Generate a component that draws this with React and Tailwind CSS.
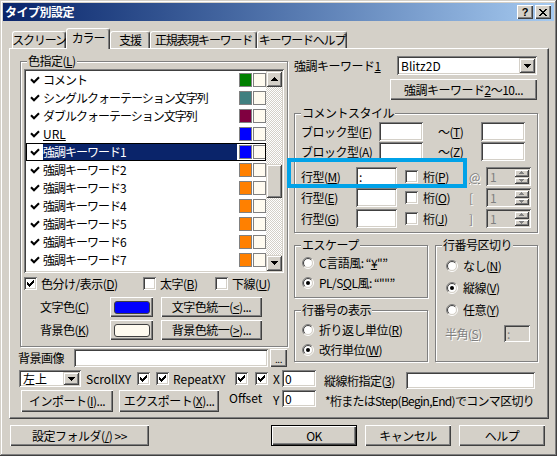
import React from "react";

const RAISED = "shadow-[inset_1px_1px_#ffffff,inset_-1px_-1px_#404040,inset_-2px_-2px_#808080]";
const SBTN = "shadow-[inset_1px_1px_#d4d0c8,inset_-1px_-1px_#404040,inset_2px_2px_#ffffff,inset_-2px_-2px_#808080]";
const SUNKEN = "shadow-[inset_1px_1px_#808080,inset_-1px_-1px_#ffffff,inset_2px_2px_#404040,inset_-2px_-2px_#d4d0c8]";
const DITHER = "bg-[repeating-conic-gradient(#ffffff_0_25%,#d4d0c8_0_50%)] bg-[length:2px_2px]";

function Tri({ up = false, color = "#000000" }) {
  return (
    <svg width="7" height="4" viewBox="0 0 7 4" shapeRendering="crispEdges">
      {up ? (
        <path d="M3 0h1v1h1v1h1v1h1v1H0V3h1V2h1V1h1z" fill={color} />
      ) : (
        <path d="M0 0h7v1H6v1H5v1H4v1H3V3H2V2H1V1H0z" fill={color} />
      )}
    </svg>
  );
}

function TinyTri({ up = false }) {
  return (
    <svg width="5" height="3" viewBox="0 0 5 3" shapeRendering="crispEdges">
      {up ? (
        <path d="M2 0h1v1h1v1h1v1H0V2h1V1h1z" fill="#808080" />
      ) : (
        <path d="M0 0h5v1H4v1H3v1H2V2H1V1H0z" fill="#808080" />
      )}
    </svg>
  );
}

function Btn({ className = "", children }) {
  return (
    <div className={`flex items-center justify-center whitespace-nowrap bg-[#d4d0c8] ${RAISED} ${className}`}>
      {children}
    </div>
  );
}

function Field({ className = "", children }) {
  return <div className={`bg-white ${SUNKEN} ${className}`}>{children}</div>;
}

function Check({ checked = false }) {
  return (
    <span className={`w-[13px] h-[13px] shrink-0 bg-white flex items-center justify-center ${SUNKEN}`}>
      {checked && (
        <svg width="7" height="7" viewBox="0 0 7 7" shapeRendering="crispEdges">
          <path d="M6 0h1v3H6v1H5v1H4v1H3v1H2V6H1V5H0V2h1v1h1v1h1V3h1V2h1V1h1z" fill="#000" />
        </svg>
      )}
    </span>
  );
}

function Radio({ checked = false }) {
  const c = 6;
  const r1 = 5.5;
  const r2 = 4.5;
  const d1 = r1 / Math.SQRT2;
  const d2 = r2 / Math.SQRT2;
  return (
    <svg width="12" height="12" viewBox="0 0 12 12" className="shrink-0">
      <circle cx="6" cy="6" r="4.5" fill="#ffffff" />
      <path d={`M${c - d1} ${c + d1} A${r1} ${r1} 0 0 1 ${c + d1} ${c - d1}`} stroke="#808080" fill="none" />
      <path d={`M${c + d1} ${c - d1} A${r1} ${r1} 0 0 1 ${c - d1} ${c + d1}`} stroke="#ffffff" fill="none" />
      <path d={`M${c - d2} ${c + d2} A${r2} ${r2} 0 0 1 ${c + d2} ${c - d2}`} stroke="#404040" fill="none" />
      <path d={`M${c + d2} ${c - d2} A${r2} ${r2} 0 0 1 ${c - d2} ${c + d2}`} stroke="#d4d0c8" fill="none" />
      {checked && <circle cx="6" cy="6" r="2" fill="#000000" />}
    </svg>
  );
}

function ListCheck() {
  return (
    <svg width="10" height="8" viewBox="0 0 10 8" className="shrink-0">
      <path d="M1 3.2 L4 6.2 L9 1.2" stroke="#000" strokeWidth="2.1" fill="none" />
    </svg>
  );
}

function Group({ label, className = "", children }) {
  return (
    <div className={`relative border border-[#808080] shadow-[inset_1px_1px_#ffffff,1px_1px_#ffffff] ${className}`}>
      <span className="absolute left-[6px] top-[-8px] px-[1px] bg-[#d4d0c8] leading-[14px] whitespace-nowrap">
        {label}
      </span>
      {children}
    </div>
  );
}

function Combo({ className = "", text }) {
  return (
    <div className={`bg-white ${SUNKEN} p-[2px] flex ${className}`}>
      <span className="flex-1 pl-[2px] flex items-center tracking-normal">{text}</span>
      <div className={`w-[16px] bg-[#d4d0c8] ${SBTN} flex items-center justify-center`}>
        <Tri />
      </div>
    </div>
  );
}

function Spin() {
  return (
    <div className={`w-[45px] h-[19px] bg-[#d4d0c8] ${SUNKEN} p-[2px] flex`}>
      <span className="flex-1 pl-[2px] flex items-center text-[#808080]">1</span>
      <div className="w-[15px] flex flex-col">
        <div className={`flex-1 bg-[#d4d0c8] ${SBTN} flex items-center justify-center`}>
          <TinyTri up />
        </div>
        <div className={`flex-1 bg-[#d4d0c8] ${SBTN} flex items-center justify-center`}>
          <TinyTri />
        </div>
      </div>
    </div>
  );
}

function Tab({ w, sel = false, children }) {
  return (
    <div
      className={`${w} shrink-0 flex items-center justify-center whitespace-nowrap tracking-[-1.2px] bg-[#d4d0c8] border-l border-t border-r border-l-white border-t-white border-r-[#404040] rounded-t-[3px] shadow-[inset_-1px_0_#808080] ${
        sel ? "h-[21px] -mb-[1px] z-10 pb-[2px]" : "h-[17px]"
      }`}
    >
      {children}
    </div>
  );
}

const items = [
  { t: "コメント", c: "bg-[#008000]" },
  { t: "シングルクォーテーション文字列", c: "bg-[#408080]" },
  { t: "ダブルクォーテーション文字列", c: "bg-[#800040]" },
  { t: "URL", c: "bg-[#0000ff]", u: true },
  { t: "強調キーワード1", c: "bg-[#0000ff]", sel: true },
  { t: "強調キーワード2", c: "bg-[#ff8000]" },
  { t: "強調キーワード3", c: "bg-[#ff8000]" },
  { t: "強調キーワード4", c: "bg-[#ff8000]" },
  { t: "強調キーワード5", c: "bg-[#ff8000]" },
  { t: "強調キーワード6", c: "bg-[#ff8000]" },
  { t: "強調キーワード7", c: "bg-[#ff8000]" },
];

function CommentRow({ label, mid, className = "" }) {
  return (
    <div className={`h-[19px] flex items-center ${className}`}>
      <span className="w-[84px] pl-[6px]">{label}</span>
      <Field className="w-[44px] h-[19px]" />
      <span className="ml-[15px] w-[43px]">{mid}</span>
      <Field className="w-[44px] h-[19px]" />
    </div>
  );
}

function LineRow({ label, mark, acc, first = false, className = "" }) {
  return (
    <div className={`h-[19px] flex items-center ${className}`}>
      <span className="w-[61px] pl-[6px]">{label}</span>
      <Field className="w-[41px] h-[19px] flex items-center pl-[3px]">{first ? ":" : ""}</Field>
      <span className="ml-[8px]">
        <Check />
      </span>
      <span className="ml-[5px] w-[46px]">
        桁(<u>{acc}</u>)
      </span>
      <span className="w-[17px] text-[#808080] [text-shadow:1px_1px_#ffffff]">
        {first ? <u>@</u> : mark}
      </span>
      <Spin />
    </div>
  );
}

export default function App() {
  return (
    <div className="relative w-[557px] h-[456px] overflow-hidden bg-[#d4d0c8] p-[3px] flex flex-col text-[12px] leading-[14px] tracking-[-0.5px] text-black font-['Noto_Sans_CJK_JP','Noto_Sans',sans-serif] shadow-[inset_-1px_-1px_#404040,inset_1px_1px_#d4d0c8,inset_-2px_-2px_#808080,inset_2px_2px_#ffffff]">
      {/* Title bar */}
      <div className="h-[18px] shrink-0 flex items-center pl-[2px] pr-[3px] bg-linear-to-r from-[#0a246a] to-[#a6caf0]">
        <span className="text-white font-bold tracking-[-0.5px]">タイプ別設定</span>
        <div className="ml-auto flex gap-[2px]">
          <Btn className="w-[16px] h-[14px] font-bold text-[11px] leading-[12px] tracking-normal font-['Liberation_Sans',sans-serif]">?</Btn>
          <Btn className="w-[16px] h-[14px]">
            <svg width="8" height="7" viewBox="0 0 8 7" shapeRendering="crispEdges">
              <path d="M0 0h2v1h1v1h2V1h1V0h2v1H7v1H6v1H5v1h1v1h1v1h1v1H6V6H5V5H3v1H2v1H0V6h1V5h1V4h1V3H2V2H1V1H0z" fill="#000" />
            </svg>
          </Btn>
        </div>
      </div>

      {/* Tabs */}
      <div className="mt-[7px] h-[20px] shrink-0 flex items-end pl-[9px] relative z-10">
        <Tab w="w-[54px]">スクリーン</Tab>
        <Tab w="w-[44px]" sel>
          カラー
        </Tab>
        <Tab w="w-[40px]">支援</Tab>
        <Tab w="w-[107px]">正規表現キーワード</Tab>
        <Tab w="w-[90px]">キーワードヘルプ</Tab>
      </div>

      {/* Tab panel */}
      <div className="ml-[6px] w-[540px] h-[371px] shrink-0 border border-t-white border-l-white border-r-[#404040] border-b-[#404040] shadow-[inset_-1px_-1px_#808080] flex flex-col">
        {/* top section */}
        <div className="flex">
          {/* left column */}
          <div className="w-[278px] flex flex-col">
            <Group
              label={
                <>
                  色指定(<u>L</u>)
                </>
              }
              className="ml-[10px] mt-[12px] w-[268px] h-[286px] flex flex-col"
            >
              {/* list box */}
              <div className={`ml-[3px] mt-[7px] w-[260px] h-[204px] bg-white ${SUNKEN} p-[2px] flex`}>
                <div className="w-[240px] flex flex-col tracking-[-1px]">
                  {items.map((it, i) => (
                    <div
                      key={i}
                      className={`h-[18px] flex items-center pl-[4px] ${
                        it.sel ? "outline outline-1 outline-black -outline-offset-1" : ""
                      }`}
                    >
                      <ListCheck />
                      <span
                        className={`ml-[3px] w-[194px] h-[16px] flex items-center whitespace-nowrap ${
                          it.sel ? "bg-[#0a246a] text-white" : ""
                        }`}
                      >
                        {it.u ? <u className="tracking-normal">URL</u> : it.t}
                      </span>
                      <span className={`ml-[2px] w-[13px] h-[14px] border border-[#808080] ${it.c}`} />
                      <span className="ml-[1px] w-[13px] h-[14px] border border-[#808080] bg-[#fffbf0]" />
                    </div>
                  ))}
                </div>
                <div className="w-[16px] flex flex-col">
                  <div className={`h-[16px] bg-[#d4d0c8] ${SBTN} flex items-center justify-center`}>
                    <Tri up />
                  </div>
                  <div className={`h-[77px] ${DITHER}`} />
                  <div className={`h-[34px] bg-[#d4d0c8] ${SBTN}`} />
                  <div className={`flex-1 ${DITHER}`} />
                  <div className={`h-[16px] bg-[#d4d0c8] ${SBTN} flex items-center justify-center`}>
                    <Tri />
                  </div>
                </div>
              </div>

              {/* checkbox row */}
              <div className="ml-[3px] mt-[4px] h-[13px] flex items-center">
                <div className="w-[119px] flex items-center">
                  <Check checked />
                  <span className="ml-[4px]">
                    色分け/表示(<u>D</u>)
                  </span>
                </div>
                <div className="w-[72px] flex items-center">
                  <Check />
                  <span className="ml-[4px]">
                    太字(<u>B</u>)
                  </span>
                </div>
                <div className="flex items-center">
                  <Check />
                  <span className="ml-[4px]">
                    下線(<u>U</u>)
                  </span>
                </div>
              </div>

              {/* text color */}
              <div className="mt-[7px] h-[20px] flex items-center">
                <span className="ml-[19px] w-[70px]">
                  文字色(<u>C</u>)
                </span>
                <Btn className="w-[43px] h-[20px]">
                  <span className="w-[36px] h-[13px] rounded-[3px] border border-[#404040] bg-[#0000ff]" />
                </Btn>
                <Btn className="ml-[8px] w-[101px] h-[20px]">
                  文字色統一(<u>&lt;</u>)...
                </Btn>
              </div>
              <div className="mt-[3px] h-[20px] flex items-center">
                <span className="ml-[19px] w-[70px]">
                  背景色(<u>K</u>)
                </span>
                <Btn className="w-[43px] h-[20px]">
                  <span className="w-[36px] h-[13px] rounded-[3px] border border-[#404040] bg-[#fffbf0]" />
                </Btn>
                <Btn className="ml-[8px] w-[101px] h-[20px]">
                  背景色統一(<u>&gt;</u>)...
                </Btn>
              </div>
            </Group>

            {/* background image */}
            <div className="mt-[2px] h-[18px] flex items-center pl-[8px]">
              <span className="w-[56px]">背景画像</span>
              <Field className="w-[194px] h-[18px]" />
              <Btn className="ml-[2px] w-[17px] h-[18px] text-[10px] leading-[10px] items-end pb-[3px]">...</Btn>
            </div>
          </div>

          {/* right column */}
          <div className="ml-[6px] w-[244px] flex flex-col">
            <div className="mt-[7px] h-[19px] flex items-center">
              <span>
                強調キーワード<u>1</u>
              </span>
              <Combo className="ml-auto mr-[1px] w-[140px] h-[19px]" text="Blitz2D" />
            </div>
            <Btn className="mt-[4px] self-end mr-[1px] w-[147px] h-[21px]">
              強調キーワード<u>2</u>～10...
            </Btn>

            <Group label="コメントスタイル" className="mt-[13px] h-[120px] flex flex-col">
              <CommentRow
                className="mt-[8px]"
                label={
                  <>
                    ブロック型(<u>F</u>)
                  </>
                }
                mid={
                  <>
                    ～(<u>T</u>)
                  </>
                }
              />
              <CommentRow
                className="mt-[1px]"
                label={
                  <>
                    ブロック型(<u>A</u>)
                  </>
                }
                mid={
                  <>
                    ～(<u>Z</u>)
                  </>
                }
              />
              <LineRow
                className="mt-[6px]"
                first
                acc="P"
                label={
                  <>
                    行型(<u>M</u>)
                  </>
                }
              />
              <LineRow
                className="mt-[2px]"
                mark="["
                acc="O"
                label={
                  <>
                    行型(<u>E</u>)
                  </>
                }
              />
              <LineRow
                className="mt-[2px]"
                mark="]"
                acc="J"
                label={
                  <>
                    行型(<u>G</u>)
                  </>
                }
              />
            </Group>

            <div className="mt-[12px] flex">
              <div className="w-[134px] flex flex-col">
                <Group label="エスケープ" className="h-[53px] flex flex-col pt-[7px]">
                  <div className="h-[20px] flex items-center pl-[7px]">
                    <Radio />
                    <span className="ml-[5px]">
                      C言語風: “<u>¥</u>"”
                    </span>
                  </div>
                  <div className="h-[20px] flex items-center pl-[7px]">
                    <Radio checked />
                    <span className="ml-[5px]">
                      PL/S<u>Q</u>L風: “""”
                    </span>
                  </div>
                </Group>
                <Group label="行番号の表示" className="mt-[12px] h-[52px] flex flex-col pt-[9px]">
                  <div className="h-[20px] flex items-center pl-[7px]">
                    <Radio />
                    <span className="ml-[5px]">
                      折り返し単位(<u>R</u>)
                    </span>
                  </div>
                  <div className="h-[20px] flex items-center pl-[7px]">
                    <Radio checked />
                    <span className="ml-[5px]">
                      改行単位(<u>W</u>)
                    </span>
                  </div>
                </Group>
              </div>
              <Group label="行番号区切り" className="ml-[7px] w-[103px] h-[117px] flex flex-col pt-[9px]">
                <div className="h-[22px] flex items-center pl-[10px]">
                  <Radio />
                  <span className="ml-[5px]">
                    なし(<u>N</u>)
                  </span>
                </div>
                <div className="h-[22px] flex items-center pl-[10px]">
                  <Radio checked />
                  <span className="ml-[5px]">
                    縦線(<u>V</u>)
                  </span>
                </div>
                <div className="h-[22px] flex items-center pl-[10px]">
                  <Radio />
                  <span className="ml-[5px]">
                    任意(<u>Y</u>)
                  </span>
                </div>
                <div className="mt-[4px] h-[17px] flex items-center pl-[9px]">
                  <span className="w-[59px] text-[#808080] [text-shadow:1px_1px_#ffffff]">
                    半角(<u>S</u>)
                  </span>
                  <div className={`w-[26px] h-[17px] bg-[#d4d0c8] ${SUNKEN} flex items-center pl-[3px] text-[#808080]`}>:</div>
                </div>
              </Group>
            </div>
          </div>
        </div>

        {/* bottom section */}
        <div className="flex">
          <div className="ml-[9px] w-[297px] flex flex-col">
            <div className="mt-[3px] h-[17px] flex items-center">
              <Combo className="w-[62px] h-[17px]" text="左上" />
              <span className="ml-[5px] w-[51px] tracking-normal">ScrollXY</span>
              <Check checked />
              <span className="ml-[6px]">
                <Check checked />
              </span>
              <span className="ml-[4px] w-[62px] tracking-normal">RepeatXY</span>
              <Check checked />
              <span className="ml-[7px]">
                <Check checked />
              </span>
              <span className="ml-[5px] w-[9px]">X</span>
              <Field className="w-[34px] h-[17px] flex items-center pl-[3px]">0</Field>
            </div>
            <div className="mt-[3px] h-[22px] flex items-start">
              <Btn className="ml-[2px] w-[92px] h-[22px]">
                インポート(<u>I</u>)...
              </Btn>
              <Btn className="ml-[6px] w-[100px] h-[22px]">
                エクスポート(<u>X</u>)...
              </Btn>
              <span className="ml-[10px] mt-[1px] w-[44px] tracking-normal">Offset</span>
              <span className="mt-[3px] w-[9px]">Y</span>
              <Field className="w-[34px] h-[17px] flex items-center pl-[3px]">0</Field>
            </div>
          </div>
          <div className="ml-[8px] flex flex-col">
            <div className="mt-[5px] h-[17px] flex items-center">
              <span className="w-[82px]">
                縦線桁指定(<u>3</u>)
              </span>
              <Field className="w-[129px] h-[17px]" />
            </div>
            <div className="mt-[5px] ml-[1px] tracking-[-0.7px] whitespace-nowrap">
              *桁またはStep(Begin,End)でコンマ区切り
            </div>
          </div>
        </div>
      </div>

      {/* bottom buttons */}
      <div className="mt-[6px] h-[21px] flex">
        <Btn className="ml-[7px] w-[139px] h-[21px]">
          設定フォルダ(<u>/</u>) &gt;&gt;
        </Btn>
        <div className="ml-[122px] w-[86px] h-[21px] border border-black flex">
          <Btn className="flex-1">OK</Btn>
        </div>
        <Btn className="ml-[8px] w-[86px] h-[21px]">キャンセル</Btn>
        <Btn className="ml-[8px] w-[86px] h-[21px]">ヘルプ</Btn>
      </div>

      {/* highlight annotation */}
      <div className="absolute left-[287px] top-[158px] w-[180px] h-[30px] border-[4px] border-[#00a2e8] pointer-events-none" />
    </div>
  );
}
